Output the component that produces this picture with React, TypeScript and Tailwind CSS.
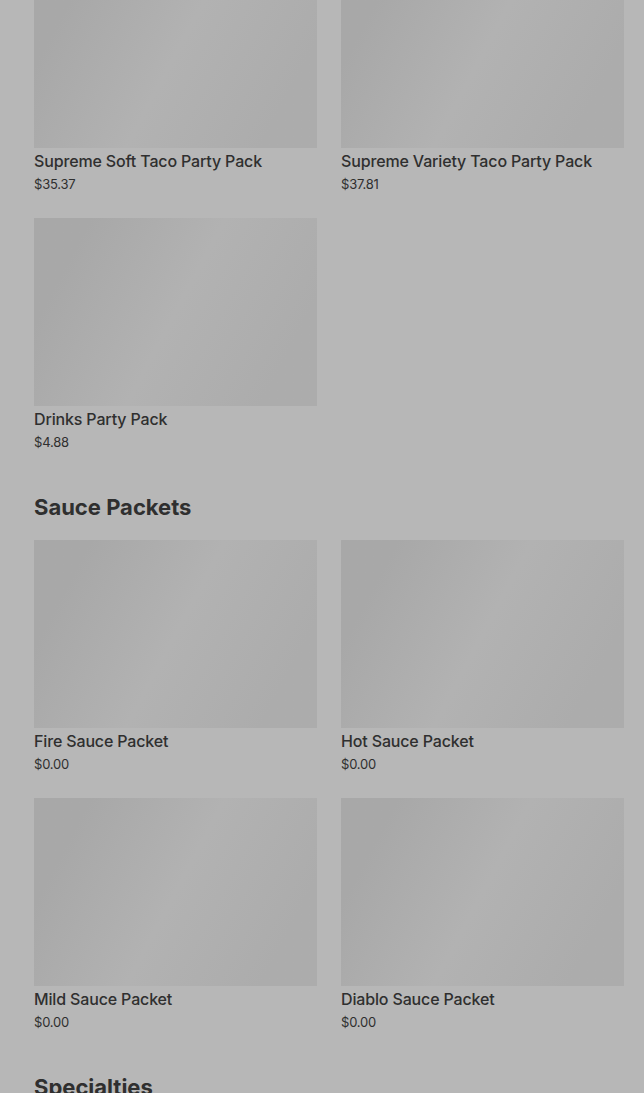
const sections = [
  {
    title: null as string | null,
    items: [
      { name: 'Supreme Soft Taco Party Pack', price: '$35.37' },
      { name: 'Supreme Variety Taco Party Pack', price: '$37.81' },
      { name: 'Drinks Party Pack', price: '$4.88' },
    ],
  },
  {
    title: 'Sauce Packets',
    items: [
      { name: 'Fire Sauce Packet', price: '$0.00' },
      { name: 'Hot Sauce Packet', price: '$0.00' },
      { name: 'Mild Sauce Packet', price: '$0.00' },
      { name: 'Diablo Sauce Packet', price: '$0.00' },
    ],
  },
  {
    title: 'Specialties',
    items: [
      { name: 'Cheesy Gordita Crunch', price: '$5.49' },
      { name: 'Crunchwrap Supreme', price: '$5.99' },
    ],
  },
]

export default function App() {
  return (
    <div className="h-[1093px] overflow-hidden bg-[#b7b7b7] font-['Inter',sans-serif] text-[#2f2f2f]">
      <div className="-mt-[40px] pl-[34px] pr-[20px]">
        {sections.map((s, i) => (
          <section key={i} className={i > 0 ? 'mt-[39px]' : ''}>
            {s.title && (
              <h2 className="mb-[17px] text-[22px] font-bold leading-[32px] tracking-[0px]">{s.title}</h2>
            )}
            <div className="grid grid-cols-2 gap-x-[24px] gap-y-[24px]">
              {s.items.map(item => (
                <ItemCard key={item.name} name={item.name} price={item.price} />
              ))}
            </div>
          </section>
        ))}
      </div>
    </div>
  )
}

function ItemCard({ name, price }: { name: string; price: string }) {
  return (
    <div>
      <div className="h-[188px] bg-linear-118 from-[#a8a8a8] from-15% via-[#b2b2b2] via-50% to-[#acacac] to-85%" />
      <div className="mt-px text-[16px] font-medium leading-[24px] tracking-[-0.15px]">{name}</div>
      <div className="mt-px text-[13px] leading-[20px] tracking-[-0.2px]">{price}</div>
    </div>
  )
}
